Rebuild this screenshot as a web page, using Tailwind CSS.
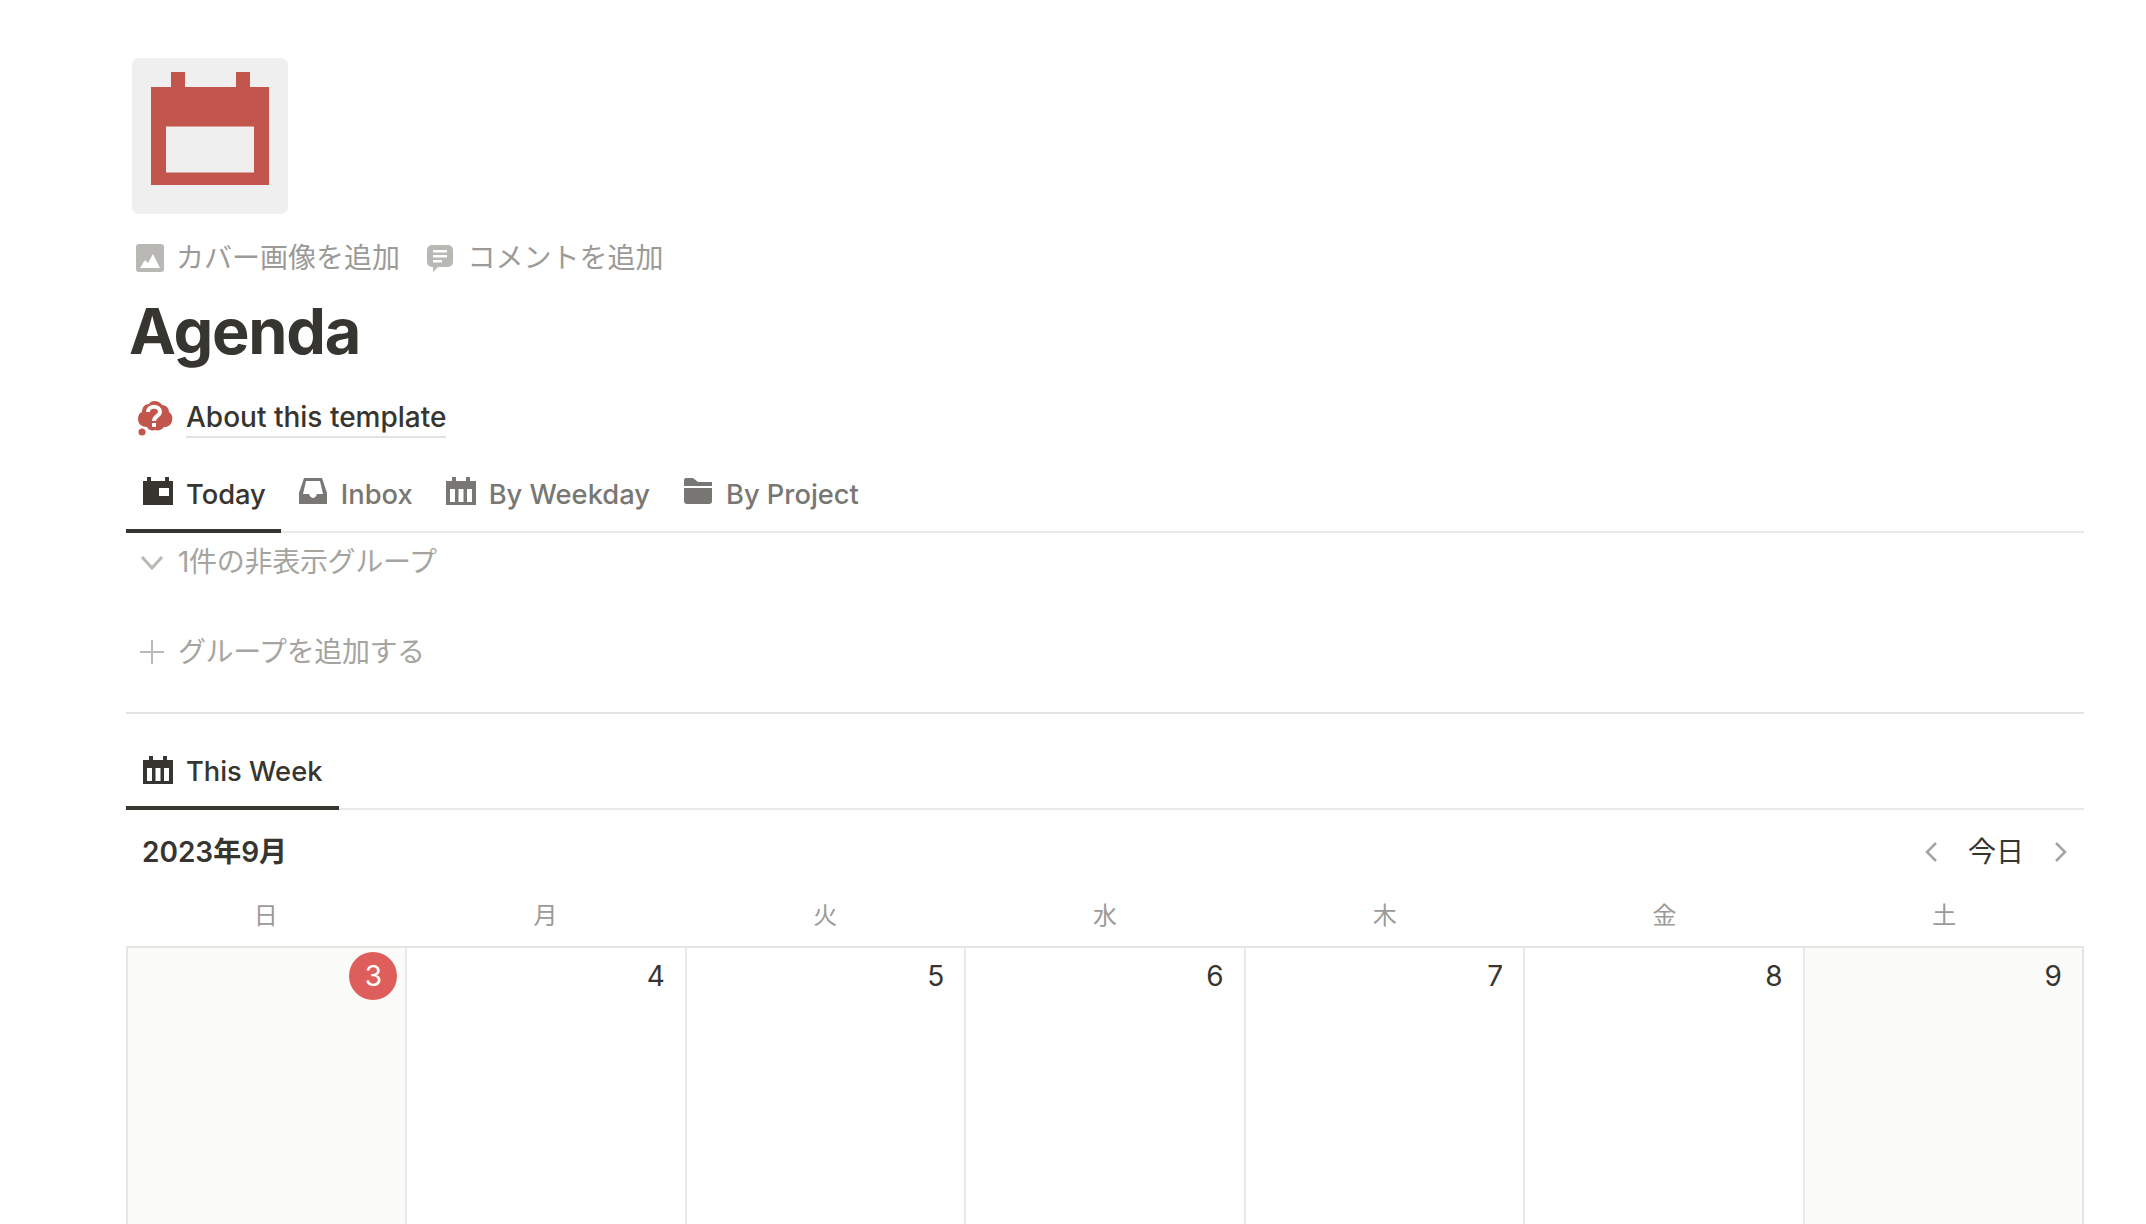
<!doctype html>
<html lang="ja">
<head>
<meta charset="utf-8">
<script src="https://cdn.jsdelivr.net/npm/@tailwindcss/browser@4"></script>
</head>
<body class="bg-white">
<div class="h-[1224px] overflow-hidden pl-[126px] pr-[62px] pt-[58px] font-['Inter','Noto_Sans_CJK_JP',sans-serif] text-[28px] text-[#37352f]">
  <div class="ml-[6px] flex h-[156px] w-[156px] items-center justify-center rounded-[7px] bg-[#efefef]">
    <svg class="h-[156px] w-[156px]" viewBox="0 0 156 156"><path fill="#c2564d" fill-rule="evenodd" d="M19 29h20V14h14v15h51V14h14v15h19v98H19zM34 68.500v46h88v-46z"/></svg>
  </div>
  <div class="mt-[16px] flex h-[56px] items-center pl-[10px] text-[#9b9a97]">
    <svg class="h-[28px] w-[28px]" viewBox="0 0 28 28"><rect width="28" height="28" rx="3" fill="#b9b8b5"/><path fill="#fff" d="M4 24l5-8 3 3 5-9 7 14z"/></svg>
    <span class="ml-[12px] w-[250px]">カバー画像を追加</span>
    <svg class="h-[28px] w-[28px]" viewBox="0 0 28 28"><path fill="#b9b8b5" d="M6 1h16a5 5 0 0 1 5 5v12a5 5 0 0 1-5 5H12l-5 5v-5H6a5 5 0 0 1-5-5V6a5 5 0 0 1 5-5z"/><path fill="#fff" d="M7 6h14v2.500H7zM7 11h14v2.500H7zM7 16h9v2.500H7z"/></svg>
    <span class="ml-[13.500px]">コメントを追加</span>
  </div>
  <h1 class="mt-[3px] ml-[3px] h-[84px] text-[63px] leading-[84px] font-bold tracking-[-1.200px]">Agenda</h1>
  <div class="mt-[23px] flex h-[44px] items-center pl-[9px]">
    <svg class="h-[36px] w-[38px]" viewBox="0 0 38 36"><path fill="#c2564d" d="M19 1c4 0 7 2 8 4 4 0 7 3 7 7 3 2 4 5 3 9-1 4-4 6-8 6-2 3-6 4-9 3-3 1-7 0-8-3-5 0-9-3-9-8 0-3 1-6 4-7 0-5 3-8 7-8 1-2 3-3 5-3z"/><circle cx="7" cy="32" r="3.500" fill="#c2564d"/><path fill="none" stroke="#fff" stroke-width="4" d="M13 12c0-7 12-7 12 0 0 4-6 4-6 9"/><rect x="17" y="23" width="4" height="4" fill="#fff"/></svg>
    <span class="ml-[13px] border-b-2 border-[#e3e3e1] leading-[38px] font-medium">About this template</span>
  </div>
  <nav class="mt-[32px] flex h-[61px] border-b-2 border-[#e9e9e7] text-[27.300px] font-medium text-[#787774]">
    <div class="-mb-[2px] flex h-[61px] items-start gap-[13px] border-b-4 border-[#37352f] pt-[5px] pr-[15px] pl-[17px] text-[#37352f]">
      <svg class="h-[28px] w-[30px]" viewBox="0 0 30 28"><path fill="#37352f" fill-rule="evenodd" d="M0 4h4V0h4v4h14V0h4v4h4v24H0zM16 11v8h10v-8z"/></svg>
      <span class="mt-[-2px]">Today</span>
    </div>
    <div class="flex items-start gap-[13px] pt-[5px] pr-[16px] pl-[17px]">
      <svg class="h-[28px] w-[30px]" viewBox="0 0 30 28"><path fill="#787774" fill-rule="evenodd" d="M6 1h18l5 15v11H1V16zM8 4L5 17h6c1 3 3 4 4 4s3-1 4-4h6L22 4z"/></svg>
      <span class="mt-[-2px]">Inbox</span>
    </div>
    <div class="flex items-start gap-[13px] pt-[5px] pr-[16px] pl-[17px]">
      <svg class="h-[28px] w-[30px]" viewBox="0 0 30 28"><path fill="#787774" fill-rule="evenodd" d="M0 4h6V0h4v4h10V0h4v4h6v24H0zM4 12v13h5V12zM12.500 12v13h5V12zM21 12v13h5V12z"/></svg>
      <span class="mt-[-2px]">By Weekday</span>
    </div>
    <div class="flex items-start gap-[13px] pt-[5px] pr-[16px] pl-[17px]">
      <svg class="h-[28px] w-[30px]" viewBox="0 0 30 28"><path fill="#787774" d="M1 3a2 2 0 0 1 2-2h7l5 4h14v4H1zM1 11h28v13a3 3 0 0 1-3 3H4a3 3 0 0 1-3-3z"/></svg>
      <span class="mt-[-2px]">By Project</span>
    </div>
  </nav>
  <div class="mt-[9px] flex h-[40px] items-center pl-[14px] text-[#a5a4a0]">
    <svg class="h-[15px] w-[24px]" viewBox="0 0 24 15"><path fill="none" stroke="#b9b8b5" stroke-width="3" d="M2 2l10 11L22 2"/></svg>
    <span class="ml-[14px] tracking-[-0.300px]">1件の非表示グループ</span>
  </div>
  <div class="mt-[50px] flex h-[40px] items-center pl-[14px] text-[#a5a4a0]">
    <svg class="h-[24px] w-[24px]" viewBox="0 0 24 24"><path fill="none" stroke="#b9b8b5" stroke-width="2" d="M12 0v24M0 12h24"/></svg>
    <span class="ml-[14px] tracking-[-0.400px]">グループを追加する</span>
  </div>
  <div class="mt-[40px] border-t-2 border-[#e3e3e1]"></div>
  <nav class="mt-[33px] flex h-[63px] border-b-2 border-[#e9e9e7] text-[27.300px] font-medium">
    <div class="-mb-[2px] flex h-[63px] items-start gap-[13px] border-b-4 border-[#37352f] px-[17px] pt-[9px]">
      <svg class="h-[28px] w-[30px]" viewBox="0 0 30 28"><path fill="#37352f" fill-rule="evenodd" d="M0 4h6V0h4v4h10V0h4v4h6v24H0zM4 12v13h5V12zM12.500 12v13h5V12zM21 12v13h5V12z"/></svg>
      <span class="mt-[-4px]">This Week</span>
    </div>
  </nav>
  <div class="flex h-[84px] items-center justify-between pr-[16px] pl-[16px]">
    <span class="font-semibold">2023年9月</span>
    <div class="flex items-center">
      <svg class="h-[22px] w-[14px]" viewBox="0 0 14 22"><path fill="none" stroke="#a5a4a0" stroke-width="2.500" d="M12 2L3 11l9 9"/></svg>
      <span class="mx-[30px]">今日</span>
      <svg class="h-[22px] w-[14px]" viewBox="0 0 14 22"><path fill="none" stroke="#a5a4a0" stroke-width="2.500" d="M2 2l9 9-9 9"/></svg>
    </div>
  </div>
  <div class="grid h-[52px] grid-cols-7 items-center pb-[8px] text-center text-[24px] text-[#9b9a97]">
    <span>日</span><span>月</span><span>火</span><span>水</span><span>木</span><span>金</span><span>土</span>
  </div>
  <div class="grid h-[400px] grid-cols-7 border-t-2 border-l-2 border-[#e5e5e3] text-right">
    <div class="border-r-2 border-[#e9e9e7] bg-[#fbfbfa] pt-[4px] pr-[8px]"><span class="ml-auto flex h-[48px] w-[48px] items-center justify-center rounded-full bg-[#dd5e5a] text-white">3</span></div>
    <div class="border-r-2 border-[#e9e9e7] pt-[7px] pr-[20px]">4</div>
    <div class="border-r-2 border-[#e9e9e7] pt-[7px] pr-[20px]">5</div>
    <div class="border-r-2 border-[#e9e9e7] pt-[7px] pr-[20px]">6</div>
    <div class="border-r-2 border-[#e9e9e7] pt-[7px] pr-[20px]">7</div>
    <div class="border-r-2 border-[#e9e9e7] pt-[7px] pr-[20px]">8</div>
    <div class="border-r-2 border-[#e5e5e3] bg-[#fbfbfa] pt-[7px] pr-[20px]">9</div>
  </div>
</div>
</body>
</html>
